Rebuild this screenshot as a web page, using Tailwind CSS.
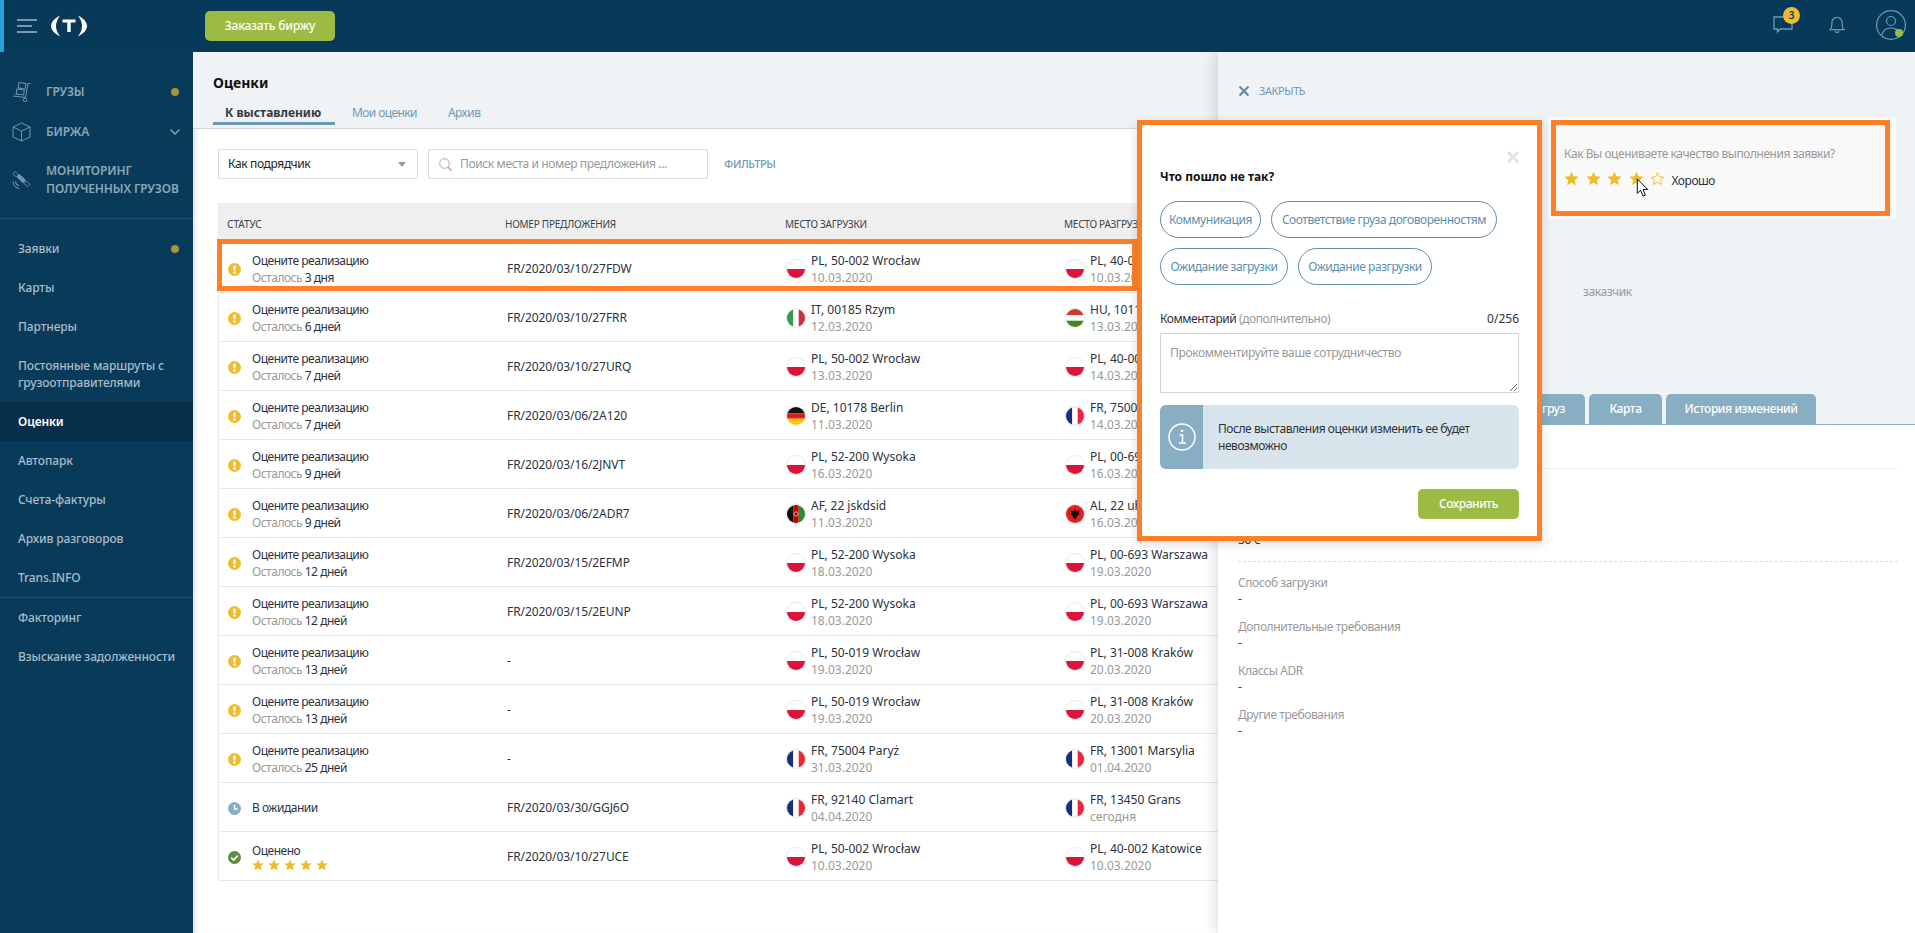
<!DOCTYPE html>
<html lang="ru">
<head>
<meta charset="utf-8">
<title>Оценки</title>
<script src="https://cdn.jsdelivr.net/npm/@tailwindcss/browser@4"></script>
</head>
<body class="m-0">
<svg class="absolute w-0 h-0" aria-hidden="true">
  <symbol id="star" viewBox="0 0 24 24"><polygon fill="currentColor" points="12,1 15.3,8.4 23.5,9.2 17.3,14.6 19.1,22.6 12,18.4 4.9,22.6 6.7,14.6 0.5,9.2 8.7,8.4"/></symbol>
  <symbol id="warn" viewBox="0 0 14 14"><circle cx="7" cy="7" r="7" fill="#f1bc2c"/><rect x="5.7" y="2.6" width="2.6" height="5.6" rx="1.2" fill="#fff"/><circle cx="7" cy="10.3" r="1.4" fill="#fff"/></symbol>
  <symbol id="pl" viewBox="0 0 20 20"><rect width="20" height="10" fill="#fff"/><rect y="10" width="20" height="10" fill="#dc143c"/></symbol>
  <symbol id="it" viewBox="0 0 20 20"><rect width="7" height="20" fill="#2f9a52"/><rect x="7" width="6" height="20" fill="#fff"/><rect x="13" width="7" height="20" fill="#c9303e"/></symbol>
  <symbol id="hu" viewBox="0 0 20 20"><rect width="20" height="7" fill="#cd3a26"/><rect y="7" width="20" height="6" fill="#fff"/><rect y="13" width="20" height="7" fill="#43861f"/></symbol>
  <symbol id="de" viewBox="0 0 20 20"><rect width="20" height="7" fill="#111"/><rect y="7" width="20" height="6" fill="#dd1c1c"/><rect y="13" width="20" height="7" fill="#fdc80f"/></symbol>
  <symbol id="fr" viewBox="0 0 20 20"><rect width="7" height="20" fill="#14317e"/><rect x="7" width="6" height="20" fill="#fff"/><rect x="13" width="7" height="20" fill="#ee2539"/></symbol>
  <symbol id="af" viewBox="0 0 20 20"><rect width="7" height="20" fill="#111"/><rect x="7" width="6" height="20" fill="#be0000"/><rect x="13" width="7" height="20" fill="#2c8a3a"/><circle cx="10" cy="10" r="2.4" fill="none" stroke="#e8b8b8" stroke-width="1"/></symbol>
  <symbol id="al" viewBox="0 0 20 20"><rect width="20" height="20" fill="#e41e20"/><path d="M10 4.5 L11.5 7 L15.5 6 L14 9 L15.5 10 L13 11.5 L12 14 L10 16 L8 14 L7 11.5 L4.5 10 L6 9 L4.5 6 L8.5 7 Z" fill="#111"/></symbol>
</svg>

<div class="relative w-[1915px] h-[933px] overflow-hidden bg-white text-[12px] text-[#2b3340] font-['Noto_Sans','DejaVu_Sans',sans-serif]">

  <!-- top bar -->
  <header class="h-[52px] flex items-center bg-[#073a58] border-l-4 border-[#2a9fd8]">
    <div class="w-[201px] flex items-center pl-[13px] gap-[14px]">
      <svg class="w-[20px] h-[14px]" viewBox="0 0 20 14" fill="none" stroke="#9db9c9" stroke-width="1.4"><path d="M0 1h20M0 7h15M0 13h20"/></svg>
      <svg class="w-[36px] h-[22px] -mt-[1px]" viewBox="0 0 36 22" fill="#fff"><path d="M9 0.500 C3 3.500 0 7.500 0 11 C0 14.500 3 18.500 9 21.500 C6 17.500 5 14 5 11 C5 8 6 4.500 9 0.500 Z"/><path d="M27 0.500 C33 3.500 36 7.500 36 11 C36 14.500 33 18.500 27 21.500 C30 17.500 31 14 31 11 C31 8 30 4.500 27 0.500 Z"/><path d="M11.500 4.500H24.500V7.500H19.700V17H16.300V7.500H11.500Z"/></svg>
    </div>
    <button class="w-[130px] h-[30px] rounded-[5px] bg-[#9bbb45] text-white text-[12px] font-medium tracking-[-0.2px]">Заказать биржу</button>
    <div class="ml-auto flex items-center pr-[9px] pb-[2px]">
      <div class="relative w-[20px] h-[18px] mr-[36px]">
        <svg class="w-[20px] h-[18px]" viewBox="0 0 20 18" fill="none" stroke="#6f9ab5" stroke-width="1.3"><path d="M1 1h18v12H7l-2.500 3V13H1z"/></svg>
        <span class="absolute -top-[9px] left-[10px] w-[17px] h-[17px] rounded-full bg-[#f1bc2c] text-[#073a58] text-[10px] font-semibold flex items-center justify-center">3</span>
      </div>
      <svg class="w-[16px] h-[18px] mr-[31px]" viewBox="0 0 17 19" fill="none" stroke="#6f9ab5" stroke-width="1.3"><path d="M1 14.500c1.500-1 2-2.500 2-5V7a5.500 5.500 0 0 1 11 0v2.500c0 2.500 .5 4 2 5zM6.500 15.500a2 2 0 0 0 4 0"/></svg>
      <div class="relative w-[30px] h-[30px]">
        <svg class="w-[30px] h-[30px]" viewBox="0 0 30 30" fill="none" stroke="#6f9ab5" stroke-width="1.2"><circle cx="15" cy="15" r="14.400"/><circle cx="15" cy="11" r="4.500"/><path d="M6 25c1-5 4-7 9-7s8 2 9 7"/></svg>
        <span class="absolute left-[19px] top-[19px] w-[8px] h-[8px] rounded-full bg-[#9bbb45]"></span>
      </div>
    </div>
  </header>

  <div class="flex h-[881px]">
    <!-- sidebar -->
    <aside class="w-[193px] shrink-0 bg-[#083a59] text-[#a9bdc9] font-medium tracking-[-0.12px]">
      <div class="pt-[20px] border-b border-[#15506f] h-[167px] font-semibold uppercase text-[#8ba7b8]">
        <div class="h-[40px] flex items-center pl-[12px] pr-[14px]">
          <svg class="w-[19px] h-[20px] mr-[15px]" viewBox="0 0 19 20" fill="none" stroke="#7295aa" stroke-width="1"><path d="M18.500 1.500H16L13.500 15.500L1 14"/><circle cx="13" cy="18" r="1.800"/><rect x="6.500" y="1" width="7" height="5.500" transform="rotate(8 10 4)"/><rect x="4.500" y="7.500" width="7.500" height="5" transform="rotate(8 8 10)"/></svg>
          <span>Грузы</span>
          <span class="ml-auto w-[8px] h-[8px] rounded-full bg-[#a8943a]"></span>
        </div>
        <div class="h-[39px] flex items-center pl-[12px] pr-[14px]">
          <svg class="w-[19px] h-[20px] mr-[15px]" viewBox="0 0 19 20" fill="none" stroke="#7295aa" stroke-width="1"><path d="M9.500 1L18 5v10l-8.500 4L1 15V5zM1 5l8.500 4L18 5M9.500 9v10"/></svg>
          <span>Биржа</span>
          <svg class="ml-auto w-[10px] h-[6px] mr-[-1px]" viewBox="0 0 10 6" fill="none" stroke="#8ba7b8" stroke-width="1.300"><path d="M.5.500L5 5 9.500.500"/></svg>
        </div>
        <div class="h-[58px] flex items-center pl-[12px]">
          <svg class="w-[19px] h-[20px] mr-[15px]" viewBox="0 0 19 20" fill="#7295aa" stroke="#7295aa" stroke-width="0.800"><path d="M3 1.500L6.500 4.500 4.500 7 1 4Z" fill="none"/><path d="M14 11L18 14 16 16.500 12 13.500Z" fill="none"/><path d="M7 4L13.500 10 11 13 5 7Z"/><path d="M1 11.500a7.500 7.500 0 0 0 6.500 7M3.500 11.500a4.500 4.500 0 0 0 3.500 4" fill="none" stroke-width="1.100"/></svg>
          <span class="leading-[18px]">Мониторинг<br>полученных грузов</span>
        </div>
      </div>
      <nav class="pt-[10px]">
        <div class="h-[39px] flex items-center pl-[18px] pr-[14px]"><span>Заявки</span><span class="ml-auto w-[8px] h-[8px] rounded-full bg-[#a8943a]"></span></div>
        <div class="h-[39px] flex items-center pl-[18px]">Карты</div>
        <div class="h-[39px] flex items-center pl-[18px]">Партнеры</div>
        <div class="h-[56px] flex items-center pl-[18px] leading-[17px]"><span>Постоянные маршруты с<br>грузоотправителями</span></div>
        <div class="h-[39px] flex items-center pl-[18px] bg-[#052f49] text-white font-semibold">Оценки</div>
        <div class="h-[39px] flex items-center pl-[18px]">Автопарк</div>
        <div class="h-[39px] flex items-center pl-[18px]">Счета-фактуры</div>
        <div class="h-[39px] flex items-center pl-[18px]">Архив разговоров</div>
        <div class="h-[40px] flex items-center pl-[18px] border-b border-[#15506f]">Trans.INFO</div>
        <div class="h-[39px] flex items-center pl-[18px]">Факторинг</div>
        <div class="h-[39px] flex items-center pl-[18px]">Взыскание задолженности</div>
      </nav>
    </aside>

    <!-- main -->
    <main class="flex-1 min-w-0 shadow-[inset_6px_0_6px_-5px_rgba(0,0,0,0.18)]">
      <div class="h-[77px] bg-[#eff3f6] border-b border-[#cfd6da] pl-[20px] pt-[21px]">
        <h1 class="text-[14px] leading-[20px] font-bold text-[#111]">Оценки</h1>
        <div class="flex mt-[8px] h-[24px]">
          <div class="w-[122px] h-[24px] border-b-[3px] border-[#6a9ab5] pl-[12px] font-bold text-[#333a44] leading-[24px]">К выставлению</div>
          <div class="ml-[17px] text-[#6f9ab5] leading-[24px] tracking-[-0.6px]">Мои оценки</div>
          <div class="ml-[31px] text-[#6f9ab5] leading-[24px] tracking-[-0.5px]">Архив</div>
        </div>
      </div>

      <div class="flex items-center pl-[25px] mt-[20px] h-[30px] tracking-[-0.37px]">
        <div class="w-[200px] h-[30px] bg-white border border-[#d9dde0] flex items-center pl-[9px] pr-[11px] text-[#222] rounded-[1px]">
          <span>Как подрядчик</span>
          <span class="ml-auto w-0 h-0 border-x-[4px] border-x-transparent border-t-[5px] border-t-[#999]"></span>
        </div>
        <div class="ml-[10px] w-[280px] h-[30px] bg-white border border-[#d9dde0] flex items-center pl-[10px] text-[#999] rounded-[1px]">
          <svg class="w-[13px] h-[13px] mr-[8px]" viewBox="0 0 13 13" fill="none" stroke="#aaa" stroke-width="1"><circle cx="5.500" cy="5.500" r="4.800"/><path d="M9 9l3.500 3.500" stroke-width="1.500"/></svg>
          <span>Поиск места и номер предложения ...</span>
        </div>
        <div class="ml-[16px] text-[11px] text-[#6f9ab5] font-medium">ФИЛЬТРЫ</div>
      </div>

      <div class="ml-[25px] mt-[24px] border-l border-[#e3e9ef]">
        <div class="grid grid-cols-[286px_279px_279px_1fr] h-[41px] items-center bg-[#efefef] text-[10px] text-[#3a4350] pt-[1px] tracking-[-0.25px]">
          <div class="pl-[8px] tracking-normal">СТАТУС</div><div>НОМЕР ПРЕДЛОЖЕНИЯ</div><div class="pl-[1px]">МЕСТО ЗАГРУЗКИ</div><div class="pl-[1px]">МЕСТО РАЗГРУЗКИ</div>
        </div>

        <div class="grid grid-cols-[286px_279px_279px_1fr] h-[49px] items-center border-b border-[#e3e9ef] pt-[2px]">
          <div class="flex items-center pl-[9px] gap-[11px] tracking-[-0.48px]"><svg class="w-[13px] h-[13px]"><use href="#warn"/></svg><div class="leading-[17px]"><div>Оцените реализацию</div><div><span class="text-[#999]">Осталось</span> 3 дня</div></div></div>
          <div class="pl-[2px] tracking-[-0.08px]">FR/2020/03/10/27FDW</div>
          <div class="flex items-center pl-[2px] gap-[5px]"><svg class="w-[20px] h-[20px] rounded-full border border-[#e6e6e6]"><use href="#pl"/></svg><div class="leading-[17px]"><div>PL, 50-002 Wrocław</div><div class="text-[#999]">10.03.2020</div></div></div>
          <div class="flex items-center pl-[2px] gap-[5px]"><svg class="w-[20px] h-[20px] rounded-full border border-[#e6e6e6]"><use href="#pl"/></svg><div class="leading-[17px]"><div>PL, 40-002 Katowice</div><div class="text-[#999]">10.03.2020</div></div></div>
        </div>
        <div class="grid grid-cols-[286px_279px_279px_1fr] h-[49px] items-center border-b border-[#e3e9ef] pt-[2px]">
          <div class="flex items-center pl-[9px] gap-[11px] tracking-[-0.48px]"><svg class="w-[13px] h-[13px]"><use href="#warn"/></svg><div class="leading-[17px]"><div>Оцените реализацию</div><div><span class="text-[#999]">Осталось</span> 6 дней</div></div></div>
          <div class="pl-[2px] tracking-[-0.08px]">FR/2020/03/10/27FRR</div>
          <div class="flex items-center pl-[2px] gap-[5px]"><svg class="w-[20px] h-[20px] rounded-full border border-[#e6e6e6]"><use href="#it"/></svg><div class="leading-[17px]"><div>IT, 00185 Rzym</div><div class="text-[#999]">12.03.2020</div></div></div>
          <div class="flex items-center pl-[2px] gap-[5px]"><svg class="w-[20px] h-[20px] rounded-full border border-[#e6e6e6]"><use href="#hu"/></svg><div class="leading-[17px]"><div>HU, 1011 Budapest</div><div class="text-[#999]">13.03.2020</div></div></div>
        </div>
        <div class="grid grid-cols-[286px_279px_279px_1fr] h-[49px] items-center border-b border-[#e3e9ef] pt-[2px]">
          <div class="flex items-center pl-[9px] gap-[11px] tracking-[-0.48px]"><svg class="w-[13px] h-[13px]"><use href="#warn"/></svg><div class="leading-[17px]"><div>Оцените реализацию</div><div><span class="text-[#999]">Осталось</span> 7 дней</div></div></div>
          <div class="pl-[2px] tracking-[-0.08px]">FR/2020/03/10/27URQ</div>
          <div class="flex items-center pl-[2px] gap-[5px]"><svg class="w-[20px] h-[20px] rounded-full border border-[#e6e6e6]"><use href="#pl"/></svg><div class="leading-[17px]"><div>PL, 50-002 Wrocław</div><div class="text-[#999]">13.03.2020</div></div></div>
          <div class="flex items-center pl-[2px] gap-[5px]"><svg class="w-[20px] h-[20px] rounded-full border border-[#e6e6e6]"><use href="#pl"/></svg><div class="leading-[17px]"><div>PL, 40-002 Katowice</div><div class="text-[#999]">14.03.2020</div></div></div>
        </div>
        <div class="grid grid-cols-[286px_279px_279px_1fr] h-[49px] items-center border-b border-[#e3e9ef] pt-[2px]">
          <div class="flex items-center pl-[9px] gap-[11px] tracking-[-0.48px]"><svg class="w-[13px] h-[13px]"><use href="#warn"/></svg><div class="leading-[17px]"><div>Оцените реализацию</div><div><span class="text-[#999]">Осталось</span> 7 дней</div></div></div>
          <div class="pl-[2px] tracking-[-0.08px]">FR/2020/03/06/2A120</div>
          <div class="flex items-center pl-[2px] gap-[5px]"><svg class="w-[20px] h-[20px] rounded-full border border-[#e6e6e6]"><use href="#de"/></svg><div class="leading-[17px]"><div>DE, 10178 Berlin</div><div class="text-[#999]">11.03.2020</div></div></div>
          <div class="flex items-center pl-[2px] gap-[5px]"><svg class="w-[20px] h-[20px] rounded-full border border-[#e6e6e6]"><use href="#fr"/></svg><div class="leading-[17px]"><div>FR, 75004 Paryż</div><div class="text-[#999]">14.03.2020</div></div></div>
        </div>
        <div class="grid grid-cols-[286px_279px_279px_1fr] h-[49px] items-center border-b border-[#e3e9ef] pt-[2px]">
          <div class="flex items-center pl-[9px] gap-[11px] tracking-[-0.48px]"><svg class="w-[13px] h-[13px]"><use href="#warn"/></svg><div class="leading-[17px]"><div>Оцените реализацию</div><div><span class="text-[#999]">Осталось</span> 9 дней</div></div></div>
          <div class="pl-[2px] tracking-[-0.08px]">FR/2020/03/16/2JNVT</div>
          <div class="flex items-center pl-[2px] gap-[5px]"><svg class="w-[20px] h-[20px] rounded-full border border-[#e6e6e6]"><use href="#pl"/></svg><div class="leading-[17px]"><div>PL, 52-200 Wysoka</div><div class="text-[#999]">16.03.2020</div></div></div>
          <div class="flex items-center pl-[2px] gap-[5px]"><svg class="w-[20px] h-[20px] rounded-full border border-[#e6e6e6]"><use href="#pl"/></svg><div class="leading-[17px]"><div>PL, 00-693 Warszawa</div><div class="text-[#999]">16.03.2020</div></div></div>
        </div>
        <div class="grid grid-cols-[286px_279px_279px_1fr] h-[49px] items-center border-b border-[#e3e9ef] pt-[2px]">
          <div class="flex items-center pl-[9px] gap-[11px] tracking-[-0.48px]"><svg class="w-[13px] h-[13px]"><use href="#warn"/></svg><div class="leading-[17px]"><div>Оцените реализацию</div><div><span class="text-[#999]">Осталось</span> 9 дней</div></div></div>
          <div class="pl-[2px] tracking-[-0.08px]">FR/2020/03/06/2ADR7</div>
          <div class="flex items-center pl-[2px] gap-[5px]"><svg class="w-[20px] h-[20px] rounded-full border border-[#e6e6e6]"><use href="#af"/></svg><div class="leading-[17px]"><div>AF, 22 jskdsid</div><div class="text-[#999]">11.03.2020</div></div></div>
          <div class="flex items-center pl-[2px] gap-[5px]"><svg class="w-[20px] h-[20px] rounded-full border border-[#e6e6e6]"><use href="#al"/></svg><div class="leading-[17px]"><div>AL, 22 uhsdj</div><div class="text-[#999]">16.03.2020</div></div></div>
        </div>
        <div class="grid grid-cols-[286px_279px_279px_1fr] h-[49px] items-center border-b border-[#e3e9ef] pt-[2px]">
          <div class="flex items-center pl-[9px] gap-[11px] tracking-[-0.48px]"><svg class="w-[13px] h-[13px]"><use href="#warn"/></svg><div class="leading-[17px]"><div>Оцените реализацию</div><div><span class="text-[#999]">Осталось</span> 12 дней</div></div></div>
          <div class="pl-[2px] tracking-[-0.08px]">FR/2020/03/15/2EFMP</div>
          <div class="flex items-center pl-[2px] gap-[5px]"><svg class="w-[20px] h-[20px] rounded-full border border-[#e6e6e6]"><use href="#pl"/></svg><div class="leading-[17px]"><div>PL, 52-200 Wysoka</div><div class="text-[#999]">18.03.2020</div></div></div>
          <div class="flex items-center pl-[2px] gap-[5px]"><svg class="w-[20px] h-[20px] rounded-full border border-[#e6e6e6]"><use href="#pl"/></svg><div class="leading-[17px]"><div>PL, 00-693 Warszawa</div><div class="text-[#999]">19.03.2020</div></div></div>
        </div>
        <div class="grid grid-cols-[286px_279px_279px_1fr] h-[49px] items-center border-b border-[#e3e9ef] pt-[2px]">
          <div class="flex items-center pl-[9px] gap-[11px] tracking-[-0.48px]"><svg class="w-[13px] h-[13px]"><use href="#warn"/></svg><div class="leading-[17px]"><div>Оцените реализацию</div><div><span class="text-[#999]">Осталось</span> 12 дней</div></div></div>
          <div class="pl-[2px] tracking-[-0.08px]">FR/2020/03/15/2EUNP</div>
          <div class="flex items-center pl-[2px] gap-[5px]"><svg class="w-[20px] h-[20px] rounded-full border border-[#e6e6e6]"><use href="#pl"/></svg><div class="leading-[17px]"><div>PL, 52-200 Wysoka</div><div class="text-[#999]">18.03.2020</div></div></div>
          <div class="flex items-center pl-[2px] gap-[5px]"><svg class="w-[20px] h-[20px] rounded-full border border-[#e6e6e6]"><use href="#pl"/></svg><div class="leading-[17px]"><div>PL, 00-693 Warszawa</div><div class="text-[#999]">19.03.2020</div></div></div>
        </div>
        <div class="grid grid-cols-[286px_279px_279px_1fr] h-[49px] items-center border-b border-[#e3e9ef] pt-[2px]">
          <div class="flex items-center pl-[9px] gap-[11px] tracking-[-0.48px]"><svg class="w-[13px] h-[13px]"><use href="#warn"/></svg><div class="leading-[17px]"><div>Оцените реализацию</div><div><span class="text-[#999]">Осталось</span> 13 дней</div></div></div>
          <div class="pl-[2px]">-</div>
          <div class="flex items-center pl-[2px] gap-[5px]"><svg class="w-[20px] h-[20px] rounded-full border border-[#e6e6e6]"><use href="#pl"/></svg><div class="leading-[17px]"><div>PL, 50-019 Wrocław</div><div class="text-[#999]">19.03.2020</div></div></div>
          <div class="flex items-center pl-[2px] gap-[5px]"><svg class="w-[20px] h-[20px] rounded-full border border-[#e6e6e6]"><use href="#pl"/></svg><div class="leading-[17px]"><div>PL, 31-008 Kraków</div><div class="text-[#999]">20.03.2020</div></div></div>
        </div>
        <div class="grid grid-cols-[286px_279px_279px_1fr] h-[49px] items-center border-b border-[#e3e9ef] pt-[2px]">
          <div class="flex items-center pl-[9px] gap-[11px] tracking-[-0.48px]"><svg class="w-[13px] h-[13px]"><use href="#warn"/></svg><div class="leading-[17px]"><div>Оцените реализацию</div><div><span class="text-[#999]">Осталось</span> 13 дней</div></div></div>
          <div class="pl-[2px]">-</div>
          <div class="flex items-center pl-[2px] gap-[5px]"><svg class="w-[20px] h-[20px] rounded-full border border-[#e6e6e6]"><use href="#pl"/></svg><div class="leading-[17px]"><div>PL, 50-019 Wrocław</div><div class="text-[#999]">19.03.2020</div></div></div>
          <div class="flex items-center pl-[2px] gap-[5px]"><svg class="w-[20px] h-[20px] rounded-full border border-[#e6e6e6]"><use href="#pl"/></svg><div class="leading-[17px]"><div>PL, 31-008 Kraków</div><div class="text-[#999]">20.03.2020</div></div></div>
        </div>
        <div class="grid grid-cols-[286px_279px_279px_1fr] h-[49px] items-center border-b border-[#e3e9ef] pt-[2px]">
          <div class="flex items-center pl-[9px] gap-[11px] tracking-[-0.48px]"><svg class="w-[13px] h-[13px]"><use href="#warn"/></svg><div class="leading-[17px]"><div>Оцените реализацию</div><div><span class="text-[#999]">Осталось</span> 25 дней</div></div></div>
          <div class="pl-[2px]">-</div>
          <div class="flex items-center pl-[2px] gap-[5px]"><svg class="w-[20px] h-[20px] rounded-full border border-[#e6e6e6]"><use href="#fr"/></svg><div class="leading-[17px]"><div>FR, 75004 Paryż</div><div class="text-[#999]">31.03.2020</div></div></div>
          <div class="flex items-center pl-[2px] gap-[5px]"><svg class="w-[20px] h-[20px] rounded-full border border-[#e6e6e6]"><use href="#fr"/></svg><div class="leading-[17px]"><div>FR, 13001 Marsylia</div><div class="text-[#999]">01.04.2020</div></div></div>
        </div>
        <div class="grid grid-cols-[286px_279px_279px_1fr] h-[49px] items-center border-b border-[#e3e9ef] pt-[2px]">
          <div class="flex items-center pl-[9px] gap-[11px] tracking-[-0.48px]"><svg class="w-[13px] h-[13px]" viewBox="0 0 14 14"><circle cx="7" cy="7" r="7" fill="#88aec4"/><path d="M7 3v4.500h3.500" fill="none" stroke="#fff" stroke-width="1.500"/></svg><div>В ожидании</div></div>
          <div class="pl-[2px] tracking-[-0.08px]">FR/2020/03/30/GGJ6O</div>
          <div class="flex items-center pl-[2px] gap-[5px]"><svg class="w-[20px] h-[20px] rounded-full border border-[#e6e6e6]"><use href="#fr"/></svg><div class="leading-[17px]"><div>FR, 92140 Clamart</div><div class="text-[#999]">04.04.2020</div></div></div>
          <div class="flex items-center pl-[2px] gap-[5px]"><svg class="w-[20px] h-[20px] rounded-full border border-[#e6e6e6]"><use href="#fr"/></svg><div class="leading-[17px]"><div>FR, 13450 Grans</div><div class="text-[#999]">сегодня</div></div></div>
        </div>
        <div class="grid grid-cols-[286px_279px_279px_1fr] h-[49px] items-center border-b border-[#e3e9ef] pt-[2px]">
          <div class="flex items-center pl-[9px] gap-[11px] tracking-[-0.48px]"><svg class="w-[13px] h-[13px]" viewBox="0 0 14 14"><circle cx="7" cy="7" r="7" fill="#5e8e3e"/><path d="M3.500 7.200l2.500 2.500 4.500-4.700" fill="none" stroke="#fff" stroke-width="1.800"/></svg><div><div class="leading-[16px]">Оценено</div><div class="flex gap-[4px] text-[#f1bc2c]"><svg class="w-[12px] h-[12px]"><use href="#star"/></svg><svg class="w-[12px] h-[12px]"><use href="#star"/></svg><svg class="w-[12px] h-[12px]"><use href="#star"/></svg><svg class="w-[12px] h-[12px]"><use href="#star"/></svg><svg class="w-[12px] h-[12px]"><use href="#star"/></svg></div></div></div>
          <div class="pl-[2px] tracking-[-0.08px]">FR/2020/03/10/27UCE</div>
          <div class="flex items-center pl-[2px] gap-[5px]"><svg class="w-[20px] h-[20px] rounded-full border border-[#e6e6e6]"><use href="#pl"/></svg><div class="leading-[17px]"><div>PL, 50-002 Wrocław</div><div class="text-[#999]">10.03.2020</div></div></div>
          <div class="flex items-center pl-[2px] gap-[5px]"><svg class="w-[20px] h-[20px] rounded-full border border-[#e6e6e6]"><use href="#pl"/></svg><div class="leading-[17px]"><div>PL, 40-002 Katowice</div><div class="text-[#999]">10.03.2020</div></div></div>
        </div>
      </div>
    </main>
  </div>

  <!-- highlighted row outline -->
  <div class="absolute left-[217px] top-[239px] w-[920px] h-[52px] border-[5px] border-[#ff7f27]"></div>

  <!-- right drawer -->
  <aside class="absolute left-[1218px] top-[52px] right-0 bottom-0 bg-white flex flex-col shadow-[-4px_0_12px_rgba(0,0,0,0.12)] tracking-[-0.42px]">
    <div class="relative h-[372px] bg-[#eff3f6] pl-[21px] flex flex-col">
      <div class="flex items-center gap-[10px] mt-[33px] h-[12px] text-[11px] text-[#6f9ab5]">
        <svg class="w-[10px] h-[10px]" viewBox="0 0 10 10" stroke="#5f8ca8" stroke-width="2.200"><path d="M.5.500l9 9M9.500.500l-9 9"/></svg>
        <span>ЗАКРЫТЬ</span>
      </div>
      <div class="absolute left-[365px] top-[231px] text-[#999]">заказчик</div>
      <div class="mt-auto flex gap-[4px] ml-[191px] h-[30px] text-white font-medium">
        <div class="w-[155px] rounded-t-[5px] bg-[#88aec4] flex items-center justify-end pr-[20px]">Наш груз</div>
        <div class="w-[73px] rounded-t-[5px] bg-[#88aec4] flex items-center justify-center">Карта</div>
        <div class="w-[150px] rounded-t-[5px] bg-[#88aec4] flex items-center justify-center">История изменений</div>
      </div>
      <div class="absolute left-[330px] top-[65px] w-[348px] h-[102px] bg-[#f9f9f9] shadow-[0_0_2px_rgba(0,0,0,0.03)]"></div>
    </div>
    <div class="border-t border-[#88aec4] pl-[20px] pr-[17px]">
      <div class="h-[44px] border-b border-[#eee]"></div>
      <div class="mt-[63px] h-[16px] leading-[16px] text-[#333]">30 €</div>
      <div class="mt-[13px] border-t border-dashed border-[#ddd] pt-[13px]">
        <div class="h-[44px] leading-[16px]"><div class="text-[#999]">Способ загрузки</div><div>-</div></div>
        <div class="h-[44px] leading-[16px]"><div class="text-[#999]">Дополнительные требования</div><div>-</div></div>
        <div class="h-[44px] leading-[16px]"><div class="text-[#999]">Классы ADR</div><div>-</div></div>
        <div class="h-[44px] leading-[16px]"><div class="text-[#999]">Другие требования</div><div>-</div></div>
      </div>
    </div>
  </aside>

  <!-- rating box -->
  <div class="absolute left-[1551px] top-[120px] w-[339px] h-[96px] border-[5px] border-[#ff7f27] pl-[8px] pt-[20px] tracking-[-0.45px]">
    <div class="leading-[18px] text-[#999]">Как Вы оцениваете качество выполнения заявки?</div>
    <div class="flex items-center mt-[7px] h-[16px] text-[#f1bc2c] gap-[6.500px]">
      <svg class="w-[15px] h-[15px]"><use href="#star"/></svg>
      <svg class="w-[15px] h-[15px]"><use href="#star"/></svg>
      <svg class="w-[15px] h-[15px]"><use href="#star"/></svg>
      <svg class="w-[15px] h-[15px]"><use href="#star"/></svg>
      <svg class="w-[15px] h-[15px]" viewBox="0 0 24 24"><polygon fill="none" stroke="#f1bc2c" stroke-width="1.500" points="12,2.500 15,9.200 22,10 16.700,14.800 18.200,21.600 12,18 5.800,21.600 7.300,14.800 2,10 9,9.200"/></svg>
      <span class="mt-[5px] text-[#2b3340]">Хорошо</span>
    </div>
  </div>
  <svg class="absolute left-[1635.500px] top-[178px] w-[14px] h-[20px]" viewBox="0 0 14 21"><path d="M1 1v15l3.500-3 2.500 6 2.500-1-2.500-6H12z" fill="#fff" stroke="#000" stroke-width="1"/></svg>

  <!-- modal -->
  <section class="absolute left-[1137px] top-[120px] w-[405px] h-[421px] bg-white border-[5px] border-[#ff7f27] pl-[18px] pr-[18px] pt-[45px] shadow-[0_3px_10px_rgba(0,0,0,0.15)] tracking-[-0.45px]">
    <svg class="absolute right-[18px] top-[26px] w-[12px] h-[12px]" viewBox="0 0 12 12" stroke="#dde5ea" stroke-width="3"><path d="M1 1l10 10M11 1L1 11"/></svg>
    <h2 class="text-[12px] leading-[14px] font-bold text-[#111] tracking-normal">Что пошло не так?</h2>
    <div class="flex flex-wrap gap-x-[10px] gap-y-[10px] mt-[17px] text-[#5b90ad]">
      <button class="h-[37px] w-[101px] border border-[#5b90ad] rounded-full">Коммуникация</button>
      <button class="h-[37px] w-[226px] border border-[#5b90ad] rounded-full">Соответствие груза договоренностям</button>
      <button class="h-[37px] w-[128px] border border-[#5b90ad] rounded-full">Ожидание загрузки</button>
      <button class="h-[37px] w-[134px] border border-[#5b90ad] rounded-full">Ожидание разгрузки</button>
    </div>
    <div class="flex justify-between mt-[26px] leading-[16px]">
      <div>Комментарий <span class="text-[#999]">(дополнительно)</span></div>
      <div class="tracking-normal">0/256</div>
    </div>
    <textarea class="block w-[359px] h-[60px] mt-[6px] border border-[#d4d4d4] rounded-[1px] px-[9px] py-[10px] leading-[17px] tracking-[-0.35px] placeholder:text-[#999]" placeholder="Прокомментируйте ваше сотрудничество"></textarea>
    <div class="flex h-[64px] mt-[12px] rounded-[6px] overflow-hidden bg-[#d8e4ec]">
      <div class="w-[43px] shrink-0 bg-[#88aec4] flex items-center justify-center">
        <svg class="w-[28px] h-[28px]" viewBox="0 0 28 28" fill="none" stroke="#fff"><circle cx="14" cy="14" r="13" stroke-width="1.500"/><circle cx="14" cy="8" r="1.300" fill="#fff" stroke="none"/><path d="M11.500 12H14.500V19.500M11 20h7" stroke-width="1.600"/></svg>
      </div>
      <div class="pl-[15px] pr-[30px] flex items-center leading-[17px] text-[#333]">После выставления оценки изменить ее будет невозможно</div>
    </div>
    <div class="flex justify-end mt-[20px]">
      <button class="w-[101px] h-[30px] rounded-[5px] bg-[#9bbb45] text-white font-medium">Сохранить</button>
    </div>
  </section>
</div>
</body>
</html>
